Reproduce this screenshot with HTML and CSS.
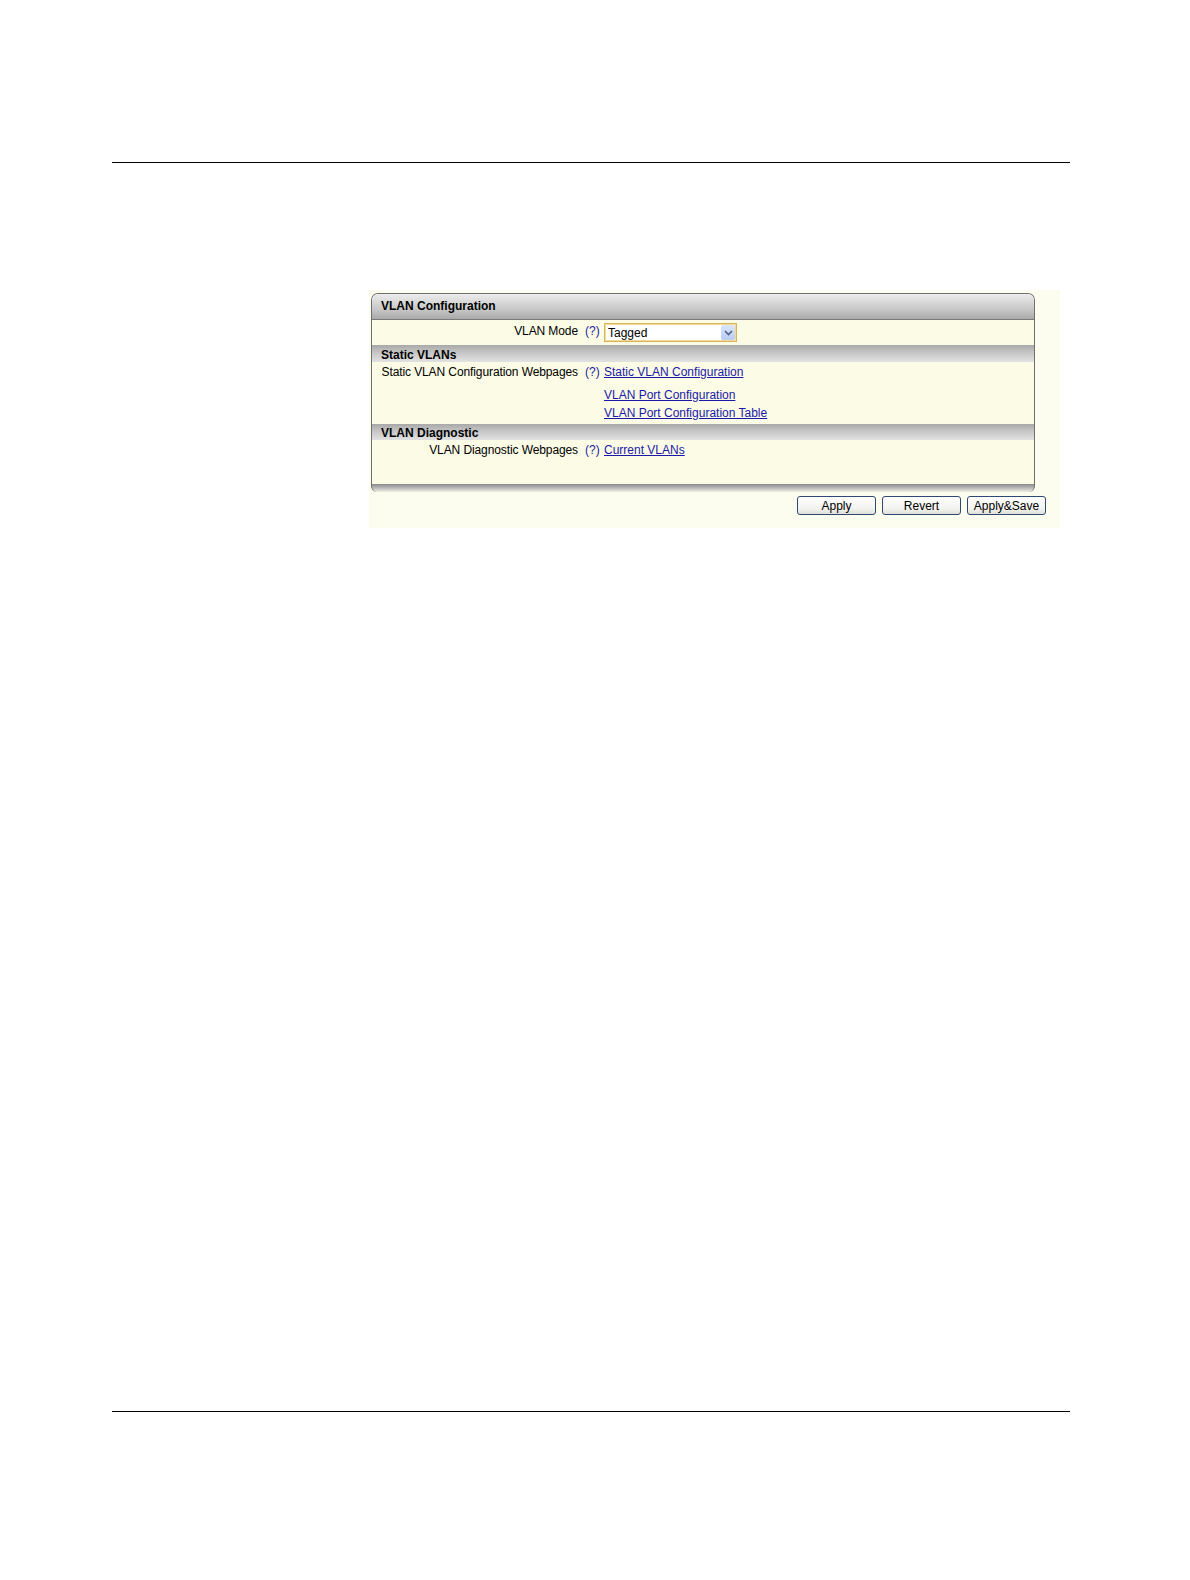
FILE: index.html
```html
<!DOCTYPE html>
<html>
<head>
<meta charset="utf-8">
<link rel="stylesheet" href="styles.css">
</head>
<body>
<div class="page">
  <div class="rule top"></div>
  <div class="figure">
    <div class="panel">
      <div class="hdr">VLAN Configuration</div>
      <div class="row r1">
        <div class="lbl">VLAN Mode</div>
        <div class="help">(?)</div>
        <div class="val">
          <div class="select"><span>Tagged</span><span class="arrow"><svg width="9" height="6" viewBox="0 0 9 6"><path d="M1 1 L4.5 4.5 L8 1" fill="none" stroke="#4d6185" stroke-width="1.6"/></svg></span></div>
        </div>
      </div>
      <div class="sec">Static VLANs</div>
      <div class="row r2">
        <div class="lbl">Static VLAN Configuration Webpages</div>
        <div class="help">(?)</div>
        <div class="val links">
          <a href="#">Static VLAN Configuration</a>
          <a href="#" class="gap">VLAN Port Configuration</a>
          <a href="#">VLAN Port Configuration Table</a>
        </div>
      </div>
      <div class="sec s2">VLAN Diagnostic</div>
      <div class="row r3">
        <div class="lbl">VLAN Diagnostic Webpages</div>
        <div class="help">(?)</div>
        <div class="val links"><a href="#">Current VLANs</a></div>
      </div>
    </div>
    <div class="shadow"></div>
    <div class="buttons">
      <button>Apply</button>
      <button>Revert</button>
      <button>Apply&amp;Save</button>
    </div>
  </div>
  <div class="rule bottom"></div>
</div>
</body>
</html>
```
FILE: styles.css
```css
html, body { margin: 0; padding: 0; background: #fff; overflow: hidden; }
body { font-family: "Liberation Sans", Arial, sans-serif; font-size: 12px; color: #000; }
.page { width: 1190px; height: 1580px; display: flow-root; box-sizing: border-box; padding-top: 162px; }
.rule { height: 1px; background: #000; margin-left: 112px; width: 958px; }
.rule.bottom { margin-top: 883px; }
.figure { margin: 127px 0 0 369px; width: 691px; height: 238px; background: #fdfdef; padding-top: 3px; box-sizing: border-box; }
.panel { margin-left: 2px; width: 664px; height: 191px; box-sizing: border-box; border: 1px solid #6f6f6f; border-bottom: none; border-radius: 7px 7px 0 0; background: #fbfbe6; overflow: hidden; }
.hdr { height: 26px; line-height: 25px; box-sizing: border-box; padding-left: 9px; font-weight: bold; font-size: 12px; background: linear-gradient(#ececec, #c8c8c8 60%, #a9a9a9); border-bottom: 1px solid #7a7a7a; }
.sec { height: 17px; line-height: 20px; box-sizing: border-box; padding-left: 9px; font-weight: bold; font-size: 12px; background: linear-gradient(#a8a8a8, #c6c6c6 45%, #e2e2e2); overflow: hidden; }
.sec.s2 { height: 16px; line-height: 18px; }
.row { display: flex; }
.lbl { width: 206px; text-align: right; color: #000; letter-spacing: -0.1px; }
.help { width: 14px; margin-left: 7px; color: #2323a0; }
.val { margin-left: 5px; }
.r1 { height: 25px; align-items: center; }
.r1 .lbl, .r1 .help { margin-top: -4px; }
.select { width: 128px; height: 17px; border: 1px solid #d9b45b; box-shadow: inset 0 0 0 1px #f1db98; background: #fff; display: flex; justify-content: space-between; align-items: center; padding-left: 3px; box-sizing: content-box; }
.select span:first-child { margin-top: 1px; }
.arrow { width: 14px; height: 15px; margin-right: 1px; background: linear-gradient(#dbe6fb, #b8cbf2); border-radius: 2px; display: flex; align-items: center; justify-content: center; }
.r2 { height: 62px; padding-top: 3px; box-sizing: border-box; }
.r3 { height: 48px; padding-top: 3px; box-sizing: border-box; }
.links { display: flex; flex-direction: column; line-height: 14px; }
.links a { color: #1a1aa8; text-decoration: underline; }
.links a.gap { margin-top: 9px; margin-bottom: 4px; }
.shadow { margin-left: 2px; width: 664px; height: 8px; background: linear-gradient(#8a8a8a, #b9b9b9 50%, #f0f0e6); border-radius: 0 0 6px 6px; border-left: 1px solid #6f6f6f; border-right: 1px solid #6f6f6f; box-sizing: border-box; }
.buttons { display: flex; justify-content: flex-end; gap: 6px; padding-right: 14px; margin-top: 4px; }
button { width: 79px; height: 19px; padding: 0; font-family: "Liberation Sans", Arial, sans-serif; font-size: 12px; color: #000; background: linear-gradient(#ffffff, #f2f2ee 70%, #e0e0da); border: 1px solid #2e4a74; border-radius: 3px; line-height: 16px; }
```
